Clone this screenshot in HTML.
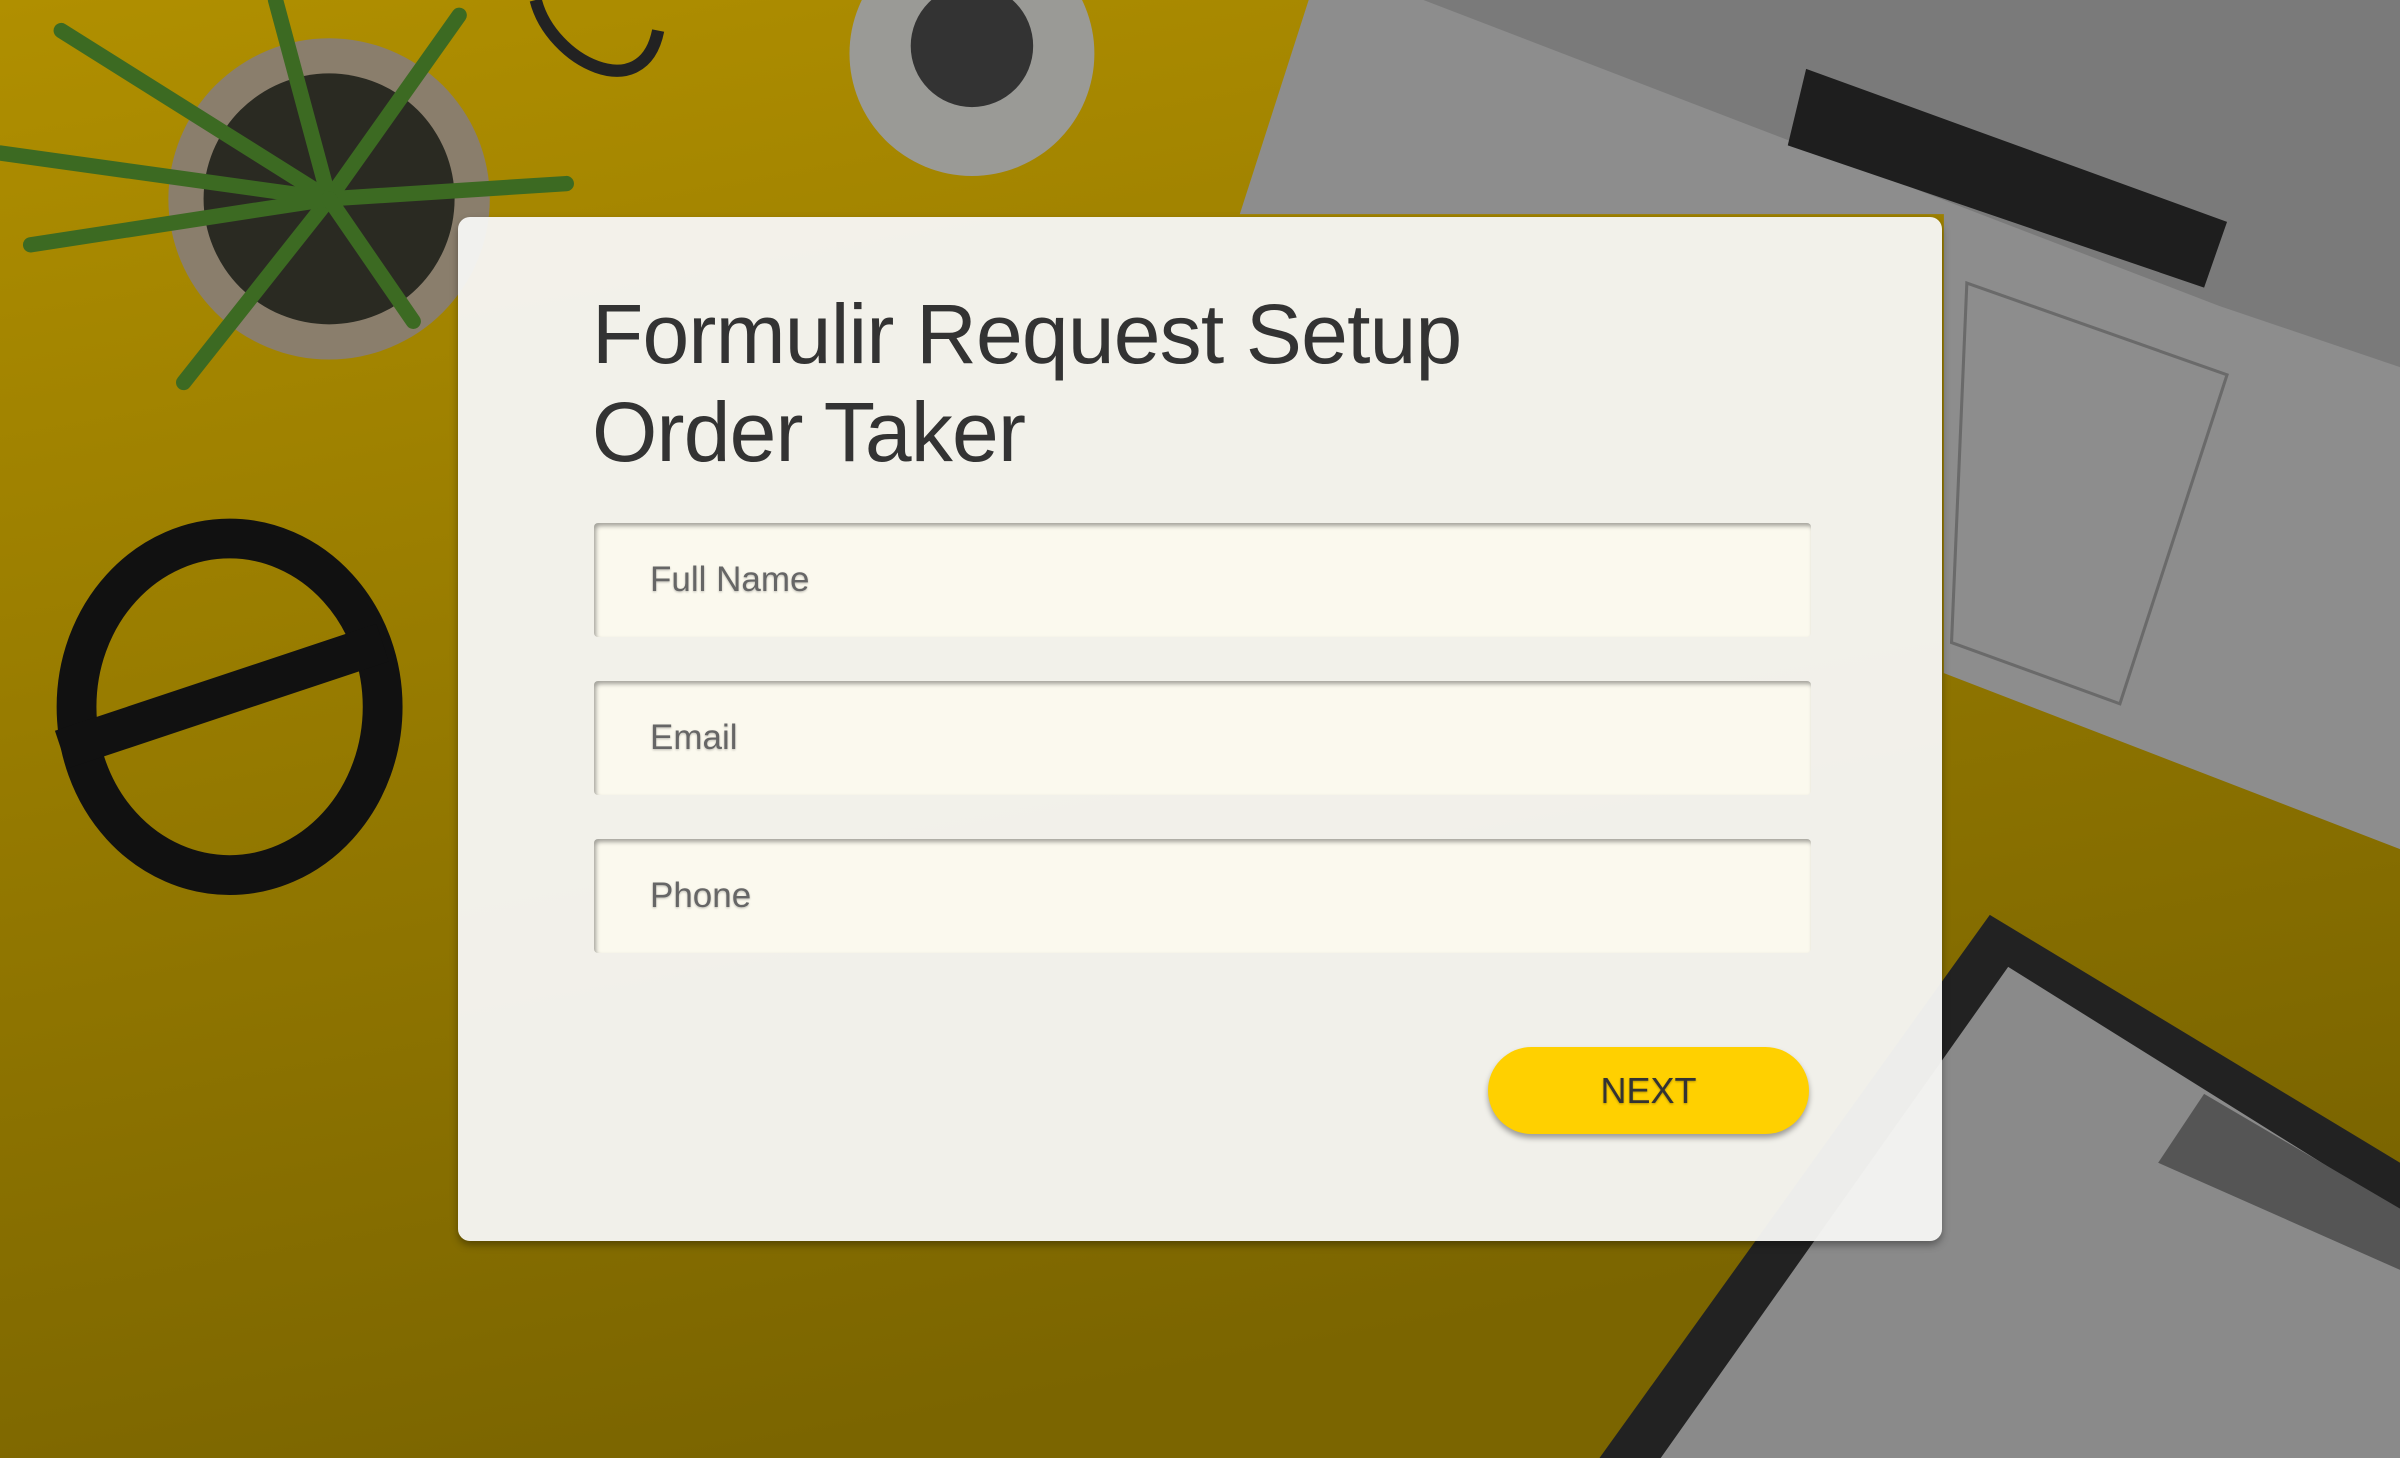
<!DOCTYPE html>
<html><head><meta charset="utf-8"><style>
html,body{margin:0;padding:0;width:2400px;height:1458px;overflow:hidden;font-family:"Liberation Sans",Arial,sans-serif}
#bg{position:absolute;left:0;top:0;width:2400px;height:1458px}
.card{position:absolute;left:458px;top:217px;width:1484px;height:1024px;background:rgba(246,246,244,0.96);border-radius:12px;box-shadow:0 4px 8px rgba(0,0,0,0.35)}
h1{position:absolute;left:134px;top:68px;margin:0;font-weight:400;font-size:84px;line-height:98px;color:#333;letter-spacing:-0.8px}
.in{position:absolute;left:136px;width:1217px;height:114px;background:#fbf9ee;border-radius:4px;box-shadow:inset 2px 3px 4px rgba(0,0,0,0.35);font-size:35px;color:#666;line-height:114px;box-sizing:border-box;padding-left:56px;text-shadow:0 1px 2px rgba(0,0,0,0.25)}
.btn{position:absolute;left:1030px;top:830px;width:321px;height:87px;background:#ffd000;border-radius:44px;box-shadow:0 4px 6px rgba(0,0,0,0.35);text-align:center;line-height:87px;font-size:36px;color:#333;text-shadow:0 1px 2px rgba(0,0,0,0.3)}
</style></head><body>
<svg id="bg" viewBox="0 0 1568 953" preserveAspectRatio="none">
<defs><linearGradient id="y" x1="0" y1="0" x2="0.3" y2="1"><stop offset="0" stop-color="#b08f00"/><stop offset="1" stop-color="#7b6500"/></linearGradient></defs>
<rect width="1568" height="953" fill="url(#y)"/>
<polygon points="855,0 1568,0 1568,555 1270,440 1270,140 810,140" fill="#8d8d8d"/>
<polygon points="930,0 1568,0 1568,240 1450,200" fill="#7a7a7a"/>
<polygon points="1180,45 1455,145 1440,188 1168,95" fill="#1e1e1e"/>
<polygon points="1285,185 1455,245 1385,460 1275,420" fill="none" stroke="#6a6a6a" stroke-width="2"/>
<polygon points="1045,953 1300,598 1568,760 1568,953" fill="#222"/>
<polygon points="1085,953 1312,632 1568,792 1568,953" fill="#8a8a8a"/>
<polygon points="1410,760 1440,715 1568,790 1568,830" fill="#555"/>
<g fill="none" stroke="#111" stroke-width="26">
<ellipse cx="150" cy="462" rx="100" ry="110"/>
<line x1="40" y1="490" x2="250" y2="420"/>
</g>
<circle cx="215" cy="130" r="105" fill="#8a7e6c"/>
<circle cx="215" cy="130" r="82" fill="#2a2a22"/>
<g stroke="#3c6a22" stroke-width="10" stroke-linecap="round">
<line x1="215" y1="130" x2="120" y2="250"/><line x1="215" y1="130" x2="20" y2="160"/>
<line x1="215" y1="130" x2="40" y2="20"/><line x1="215" y1="130" x2="300" y2="10"/>
<line x1="215" y1="130" x2="370" y2="120"/><line x1="215" y1="130" x2="180" y2="0"/>
<line x1="215" y1="130" x2="0" y2="100"/><line x1="215" y1="130" x2="270" y2="210"/>
</g>
<circle cx="635" cy="35" r="80" fill="#9a9a96"/><circle cx="635" cy="30" r="40" fill="#333"/>
<path d="M350,0 C360,40 420,70 430,20" fill="none" stroke="#222" stroke-width="8"/>
</svg>
<div class="card">
<h1>Formulir Request Setup<br>Order Taker</h1>
<div class="in" style="top:306px">Full Name</div>
<div class="in" style="top:464px">Email</div>
<div class="in" style="top:622px">Phone</div>
<div class="btn">NEXT</div>
</div>
</body></html>
